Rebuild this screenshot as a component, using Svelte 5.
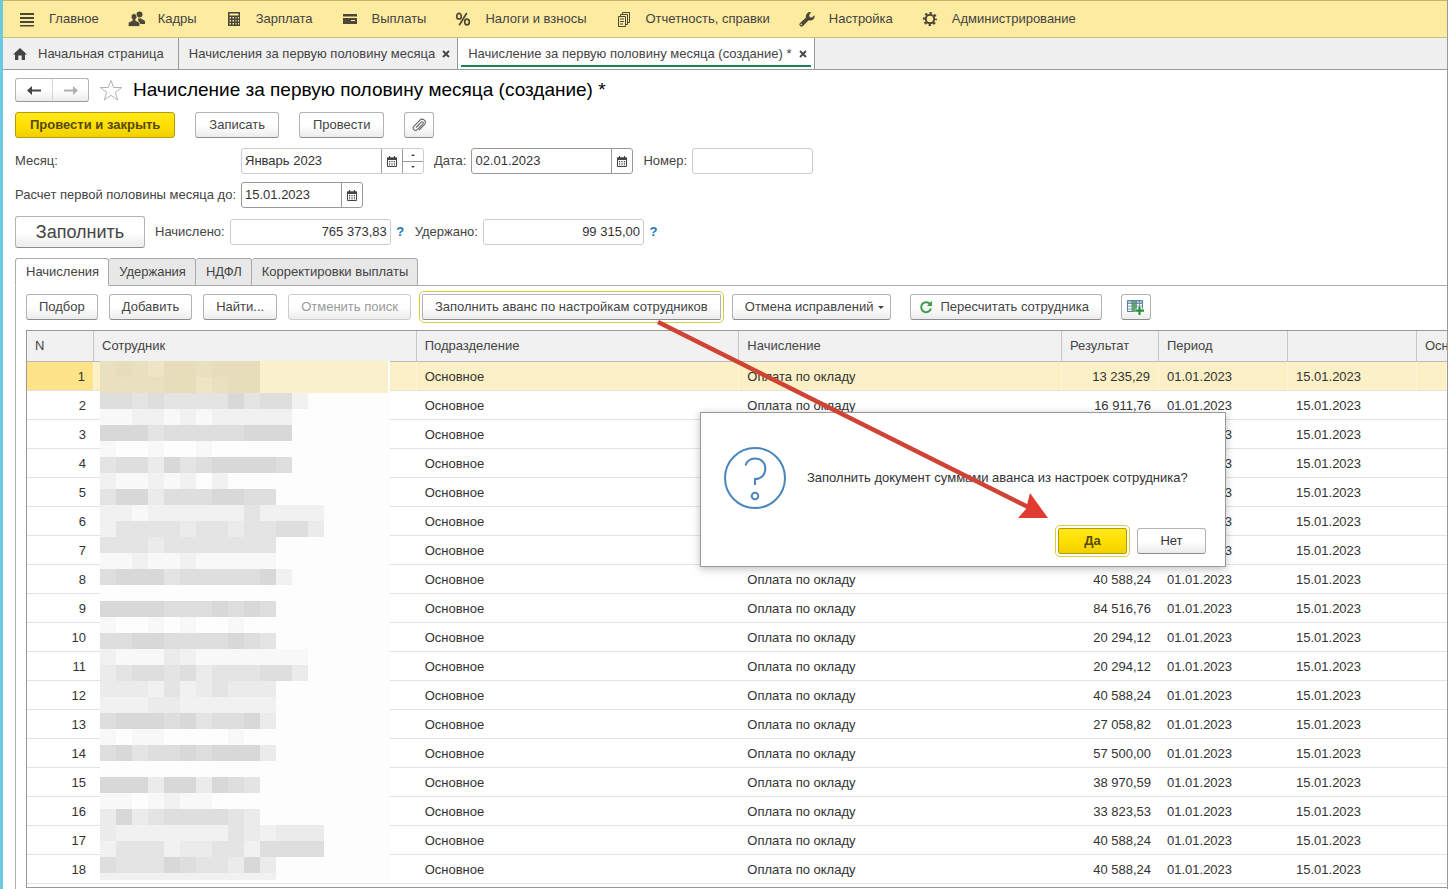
<script>
let tab = 'Начисления';
let active = 1;

const menu = [
	{ icon: 'list', label: 'Главное' },
	{ icon: 'people', label: 'Кадры' },
	{ icon: 'calc', label: 'Зарплата' },
	{ icon: 'card', label: 'Выплаты' },
	{ icon: 'percent', label: 'Налоги и взносы' },
	{ icon: 'docs', label: 'Отчетность, справки' },
	{ icon: 'wrench', label: 'Настройка' },
	{ icon: 'gear', label: 'Администрирование' }
];

const tabs = ['Начисления', 'Удержания', 'НДФЛ', 'Корректировки выплаты'];

const sums = [
	'13 235,29', '16 911,76', '27 058,82', '40 588,24', '40 588,24', '20 294,12',
	'40 588,24', '40 588,24', '84 516,76', '20 294,12', '20 294,12', '40 588,24',
	'27 058,82', '57 500,00', '38 970,59', '33 823,53', '40 588,24', '40 588,24'
];

const rows = sums.map((sum, i) => ({
	n: i + 1,
	dept: 'Основное',
	type: 'Оплата по окладу',
	sum,
	from: '01.01.2023',
	to: '15.01.2023'
}));

// hidden names: one char per 16px block
const shades = {
	1: '#f8f8f8', 2: '#f1f1f2', 3: '#ebebeb', 4: '#e4e4e5', 5: '#dfdedf', 6: '#d8d8d9',
	a: '#e8ddba', b: '#e9e0bf', c: '#efe5c4', y: '#faf0cb'
};
const blocks = [
	'babcaabaaayyyyyyyy',
	'bbbbaacbaayyyyyyyy',
	'5545444464552',
	'112212122222',
	'666455555666',
	'1  1  1',
	'455364566665',
	'211212 2',
	'46635556655',
	'22122222242222',
	'24444344344553',
	'44434444444',
	'11211211111',
	'566645555562',
	'',
	'66665556565',
	'1  1 1  1',
	'55665555654',
	'2111321111111',
	'3455453444553',
	'33324234333',
	'22233222222',
	'56665645563',
	'1 11    1',
	'56455656663',
	'',
	'6663663654',
	'11 1211',
	'3634555543',
	'32222222432333',
	'24442334425555',
	'54446544363',
	'22222222222'
];

const cells = blocks.flatMap((line, y) =>
	[...line].map((c, x) => ({ x: x * 16, y: y * 16, fill: shades[c] })).filter(c => c.fill)
);
</script>

<svelte:head>
	<title>Начисление за первую половину месяца</title>
</svelte:head>

{#snippet calendar()}
	<svg width="10" height="11" viewBox="0 0 10 11">
		<path d="M.5 2h9v8.500h-9zM.5 3.500h9M2.500 0v2M7.500 0v2" fill="none" stroke="#444" />
		<path d="M2 5.500h1.200M4.400 5.500h1.200M6.800 5.500H8M2 7.200h1.200M4.400 7.200h1.200M6.800 7.200H8M2 8.900h1.200M4.400 8.900h1.200M6.800 8.900H8" stroke="#444" />
		<path d="M0 1.500h10v2H0z" fill="#444" />
	</svg>
{/snippet}

{#snippet icon(name)}
	<svg class="icon" width="18" height="18" viewBox="0 0 18 18" fill="#4b4638">
		{#if name === 'list'}
			<path d="M1 3h14v2H1zM1 7h14v2H1zM1 11h14v2H1zM1 15h14v1.500H1z" />
		{:else if name === 'people'}
			<circle cx="11.500" cy="4.500" r="3" />
			<path d="M10 8.500h3l4 2.500v3h-6z" />
			<path stroke="#fdeb9f" stroke-width=".8" d="M6 3.500a3 3.200 0 0 1 1.700 5.800v1.200l3.300 1.500c.8.500.8 1.500.8 4.500H.2c0-3 0-4 .8-4.500l3.300-1.500V9.300A3 3.200 0 0 1 6 3.500z" />
		{:else if name === 'calc'}
			<path fill-rule="evenodd" d="M2 2h12v14H2zM3.500 3.500v2h9v-2zM3.500 7v1.500H5V7zM6.500 7v1.500H8V7zM9.500 7v1.500h1V7zM12 7v1.500h1V7zM3.500 10v1.500H5V10zM6.500 10v1.500H8V10zM9.500 10v1.500h1V10zM12 10v1.500h1V10zM3.500 13v1.500H5V13zM6.500 13v1.500H8V13zM9.500 13v1.500h1V13zM12 13v1.500h1V13z" />
		{:else if name === 'card'}
			<path d="M1 4h14v2.500H1zM1 8h14v6H1z" />
			<path d="M9 10.500h4" stroke="#fdeb9f" />
		{:else if name === 'percent'}
			<g fill="none" stroke="#4b4638" stroke-width="1.700">
				<ellipse cx="4" cy="6.200" rx="2.300" ry="2.800" />
				<ellipse cx="12" cy="12" rx="2.300" ry="2.800" />
				<path d="M11.800 3L4.200 15.200" />
			</g>
		{:else if name === 'docs'}
			<g fill="none" stroke="#4b4638">
				<path d="M2.500 6.500h7v10h-7zM4.500 6V4.500h7v10H10M6.500 4V2.500h7v10H12M4 9h4M4 11.500h4M4 14h3" />
			</g>
		{:else if name === 'wrench'}
			<path d="M15.500 5.200a4.300 4.300 0 0 1-5.800 5L4 16a2 2 0 0 1-2.900-2.900L7 7.500a4.300 4.300 0 0 1 5-5.300L10.200 5l.5 2.200 2.200.4zM2.700 13.700a.8.800 0 1 0 .1 1.300z" />
		{:else}
			<g fill="none" stroke="#4b4638">
				<circle cx="8" cy="9" r="4.200" stroke-width="2" />
				<circle cx="8" cy="9" r="6" stroke-width="2.200" stroke-dasharray="2.300 2.412" stroke-dashoffset="1.150" />
			</g>
		{/if}
	</svg>
{/snippet}

<div class="window">
	<nav class="menu">
		{#each menu as item}
			<a href="#menu">{@render icon(item.icon)}{item.label}</a>
		{/each}
	</nav>

	<div class="pages">
		<a class="page home" href="#home">
			<svg width="14" height="12" viewBox="0 0 14 12"><path d="M7 0l7 6.500h-2V12H8.700V7.500H5.300V12H2V6.500H0z" fill="#444" /></svg>
			Начальная страница
		</a>
		<div class="page">
			<a href="#list">Начисления за первую половину месяца</a>
			<button class="close" aria-label="Закрыть вкладку">
				<svg width="8" height="8" viewBox="0 0 8 8"><path d="M1 1l6 6M7 1L1 7" stroke="#444" stroke-width="1.800" /></svg>
			</button>
		</div>
		<div class="page current">
			<a href="#doc">Начисление за первую половину месяца (создание) *</a>
			<button class="close" aria-label="Закрыть документ">
				<svg width="8" height="8" viewBox="0 0 8 8"><path d="M1 1l6 6M7 1L1 7" stroke="#444" stroke-width="1.800" /></svg>
			</button>
		</div>
	</div>

	<main>
		<header>
			<div class="history">
				<button aria-label="Назад">
					<svg width="14" height="9" viewBox="0 0 14 9"><path d="M0 4.500L5 0v3.500h9v2H5V9z" fill="#444" /></svg>
				</button>
				<button aria-label="Вперед">
					<svg width="14" height="9" viewBox="0 0 14 9"><path d="M14 4.500L9 0v3.500H0v2h9V9z" fill="#b0b0b0" /></svg>
				</button>
			</div>
			<button class="star" aria-label="В избранное">
				<svg width="24" height="22" viewBox="0 0 24 22"><path d="M12 1.500l2.700 7h8l-6.400 4.800 2.400 7.700-6.700-4.700L5.300 21l2.400-7.700L1.300 8.500h8z" fill="none" stroke="#b0b0b0" /></svg>
			</button>
			<h1>Начисление за первую половину месяца (создание) *</h1>
		</header>

		<div class="commands">
			<button class="btn primary">Провести и закрыть</button>
			<button class="btn">Записать</button>
			<button class="btn">Провести</button>
			<button class="btn square" aria-label="Файлы">
				<svg width="14" height="14" viewBox="0 0 14 14"><path d="M4 9.500l5.200-5.300a1.200 1.200 0 0 1 1.700 1.700L5.200 11.700a2.300 2.300 0 0 1-3.300-3.300l6-6.200a3.100 3.100 0 0 1 4.500 4.400L7 12" fill="none" stroke="#666" stroke-width="1.100" /></svg>
			</button>
		</div>

		<div class="fields">
			<label class="wide" for="month">Месяц:</label>
			<div class="field light">
				<input id="month" class="long" value="Январь 2023" />
				<button aria-label="Выбрать месяц">{@render calendar()}</button>
				<div class="spin">
					<button aria-label="Следующий месяц"><svg width="4" height="2"><path d="M0 2l2-2 2 2z" fill="#444" /></svg></button>
					<button aria-label="Предыдущий месяц"><svg width="4" height="2"><path d="M0 0l2 2 2-2z" fill="#444" /></svg></button>
				</div>
			</div>
			<label class="next" for="date">Дата:</label>
			<div class="field">
				<input id="date" class="long" value="02.01.2023" />
				<button aria-label="Выбрать дату">{@render calendar()}</button>
			</div>
			<label class="next" for="number">Номер:</label>
			<div class="field light"><input id="number" class="number" value="" /></div>
		</div>

		<div class="fields">
			<label class="wide" for="until">Расчет первой половины месяца до:</label>
			<div class="field">
				<input id="until" class="short" value="15.01.2023" />
				<button aria-label="Выбрать дату расчета">{@render calendar()}</button>
			</div>
		</div>

		<div class="fields totals">
			<button class="btn big">Заполнить</button>
			<label class="next" for="accrued">Начислено:</label>
			<div class="field light"><input id="accrued" class="sum" value="765 373,83" readonly /></div>
			<button class="hint">?</button>
			<label class="next" for="withheld">Удержано:</label>
			<div class="field light"><input id="withheld" class="sum" value="99 315,00" readonly /></div>
			<button class="hint">?</button>
		</div>

		<div class="tabs" role="tablist">
			{#each tabs as name}
				<button role="tab" aria-selected={tab === name} class:selected={tab === name} on:click={() => (tab = name)}>{name}</button>
			{/each}
		</div>

		<section>
			<div class="toolbar">
				<button class="btn">Подбор</button>
				<button class="btn">Добавить</button>
				<button class="btn">Найти...</button>
				<button class="btn" disabled>Отменить поиск</button>
				<button class="btn framed">Заполнить аванс по настройкам сотрудников</button>
				<button class="btn drop">Отмена исправлений
					<svg width="6" height="3"><path d="M0 0h6L3 3z" fill="#444" /></svg>
				</button>
				<button class="btn recalc">
					<svg width="14" height="14" viewBox="0 0 14 14"><path d="M11.300 4.300A5 5 0 1 0 12 8.500" fill="none" stroke="#3c9d4c" stroke-width="2" /><path d="M13 .8V6H7.800z" fill="#3c9d4c" /></svg>
					Пересчитать сотрудника
				</button>
				<button class="btn square apart" aria-label="Добавить колонку">
					<svg width="17" height="15" viewBox="0 0 17 15">
						<path d="M.5.5h15v11H.5z" fill="#fff" stroke="#587f9b" />
						<path d="M1 1h14v2H1z" fill="#a9c5d8" />
						<path d="M5 1h4v11H5z" fill="#63a56c" />
						<path d="M1 3.500h14M1 6.200h4M1 9h4M9 6.200h6M5 1v11M9.500 1v11M12.500 1v6" stroke="#587f9b" stroke-width=".8" fill="none" />
						<path d="M12.500 6.500V15M8.500 10.700H17" stroke="#fff" stroke-width="4" />
						<path d="M12.500 6.500V15M8.500 10.700H17" stroke="#26903a" stroke-width="2.200" />
					</svg>
				</button>
			</div>

			<div class="grid">
				<table>
					<colgroup>
						<col class="c-n" /><col /><col /><col /><col class="c-sum" /><col class="c-date" /><col class="c-date" /><col class="c-base" />
					</colgroup>
					<thead>
						<tr>
							<th>N</th><th>Сотрудник</th><th>Подразделение</th><th>Начисление</th>
							<th>Результат</th><th>Период</th><th></th><th>Осн</th>
						</tr>
					</thead>
					<tbody>
						{#each rows as row}
							<tr class:active={active === row.n} on:click={() => (active = row.n)}>
								<td class="right">{row.n}</td>
								<td></td>
								<td>{row.dept}</td>
								<td>{row.type}</td>
								<td class="right">{row.sum}</td>
								<td>{row.from}</td>
								<td>{row.to}</td>
								<td></td>
							</tr>
						{/each}
					</tbody>
				</table>
				<svg class="mosaic" width="290" height="519" shape-rendering="crispEdges">
					<rect width="290" height="519" fill="#fdfdfd" />
					{#each cells as c}
						<rect x={c.x} y={c.y} width="16" height="16" fill={c.fill} />
					{/each}
				</svg>
			</div>
		</section>
	</main>

	<div class="dialog" role="dialog" aria-label="Вопрос">
		<div class="question">
			<svg width="62" height="62" viewBox="0 0 62 62" fill="none" stroke="#4a86bd" stroke-width="2">
				<circle cx="31" cy="31" r="30" />
				<path d="M21.500 18.500c1.500-4.500 5-7 9.500-7 6 0 10.300 4 10.300 10 0 6.500-4.500 10.500-10.300 10.500v6" />
				<circle cx="31" cy="49" r="3.300" />
			</svg>
			<p>Заполнить документ суммами аванса из настроек сотрудника?</p>
		</div>
		<div class="answers">
			<button class="btn primary framed">Да</button>
			<button class="btn">Нет</button>
		</div>
	</div>

	<svg class="arrow" width="394" height="200" viewBox="0 0 394 200">
		<path d="M3 2L375 188" stroke="#cf4335" stroke-width="4.500" />
		<path d="M393 198H363l8-9 4-16z" fill="#e03c31" />
	</svg>
</div>

<style>
	:global(body) {
		margin: 0;
		overflow: hidden;
		background: #fff;
	}

	.window {
		position: relative;
		box-sizing: border-box;
		height: 100vh;
		margin-right: 1px;
		border-left: 3px solid #6cc9df;
		border-right: 1px solid #999;
		overflow: hidden;
		color: #444;
		font: 13px/16px "Liberation Sans", Arial, sans-serif;
	}

	a {
		color: inherit;
		text-decoration: none;
	}

	button, input {
		font: inherit;
		color: inherit;
		margin: 0;
		border: 0;
		background: none;
		box-sizing: border-box;
	}

	button {
		display: flex;
		align-items: center;
		justify-content: center;
		padding: 0;
		white-space: nowrap;
	}

	svg {
		flex: none;
	}

	.menu {
		display: flex;
		gap: 29px;
		height: 36px;
		padding-left: 16px;
		border-top: 1px solid #c5b565;
		border-bottom: 1px solid #c9bf84;
		background: #fdeb9f;
	}

	.menu a {
		display: flex;
		align-items: center;
		gap: 12px;
		white-space: nowrap;
	}

	.pages {
		display: flex;
		height: 31px;
		border-bottom: 1px solid #999;
		background: #f0f0f0;
	}

	.page {
		display: flex;
		align-items: center;
		gap: 7px;
		padding: 0 7px 0 10px;
		border-right: 1px solid #999;
		white-space: nowrap;
	}

	.home {
		gap: 11px;
		padding-right: 14px;
	}

	.current {
		background: linear-gradient(#1d7f56, #1d7f56) center bottom 2px / calc(100% - 6px) 2px no-repeat #fff;
	}

	header {
		display: flex;
		align-items: center;
		gap: 10px;
		height: 24px;
	}

	main {
		padding: 8px 0 0 12px;
	}

	.history {
		display: flex;
		border: 1px solid #b3b3b3;
		border-bottom-color: #999;
		border-radius: 3px;
		background: linear-gradient(#fff, #fff 50%, #ececec);
	}

	.history button {
		width: 36px;
		height: 22px;
	}

	.history button + button {
		border-left: 1px solid #d5d5d5;
	}

	h1 {
		margin: 0;
		color: #000;
		font-size: 19px;
		font-weight: normal;
		line-height: 24px;
		white-space: nowrap;
	}

	.commands {
		display: flex;
		gap: 20px;
		margin: 10px 0;
	}

	.btn {
		height: 26px;
		padding: 0 13px;
		border: 1px solid #b3b3b3;
		border-bottom-color: #8c8c8c;
		border-radius: 3px;
		background: linear-gradient(#fff, #fff 50%, #ececec);
	}

	.btn:disabled {
		border-color: #ccc;
		color: #999;
	}

	.primary {
		padding: 0 14px;
		border-color: #b59d00;
		background: linear-gradient(#ffe71f, #ffe000 50%, #f0d000);
		color: #54490c;
		font-weight: bold;
	}

	.square {
		width: 30px;
		padding: 0;
	}

	.framed {
		border-radius: 2px;
		outline: 1px solid #dccb3c;
		outline-offset: 2px;
	}

	.fields {
		display: flex;
		align-items: center;
		gap: 5px;
		margin-bottom: 8px;
	}

	.wide {
		width: 221px;
		white-space: nowrap;
	}

	.next {
		margin-left: 5px;
	}

	.field {
		display: flex;
		height: 26px;
		box-sizing: border-box;
		border: 1px solid #999;
		border-radius: 3px;
		color: #333;
	}

	.light {
		border-color: #ccc;
	}

	.field input {
		padding: 0 3px;
		outline: 0;
	}

	.field > button {
		width: 21px;
		border-left: 1px solid #999;
	}

	.long {
		width: 139px;
	}

	.short {
		width: 99px;
	}

	.number {
		width: 119px;
	}

	.sum {
		width: 159px;
		text-align: right;
	}

	.spin {
		display: flex;
		flex-direction: column;
		width: 20px;
		border-left: 1px solid #999;
	}

	.spin button {
		flex: 1;
	}

	.spin button + button {
		border-top: 1px solid #999;
	}

	.totals {
		margin-bottom: 10px;
	}

	.big {
		width: 130px;
		height: 32px;
		font-size: 18px;
	}

	.hint {
		width: 9px;
		color: #1878b0;
		font-weight: bold;
	}

	.tabs {
		position: relative;
		z-index: 1;
		display: flex;
	}

	.tabs button {
		height: 28px;
		padding: 0 9px 0 10px;
		border: 1px solid #aaa;
		border-left: 0;
		border-radius: 3px 3px 0 0;
		background: #e8e8e8;
	}

	.tabs .selected {
		border-left: 1px solid #aaa;
		border-bottom-color: #fff;
		background: #fff;
	}

	section {
		margin-top: -1px;
		padding: 8px 0 100px 10px;
		border-top: 1px solid #aaa;
		border-left: 1px solid #aab5aa;
	}

	.toolbar {
		display: flex;
		gap: 11px;
		margin-bottom: 10px;
	}

	.toolbar .btn {
		padding: 0 12px;
	}

	.toolbar .drop {
		gap: 5px;
		padding-right: 6px;
	}

	.toolbar .recalc {
		gap: 7px;
		margin-left: 8px;
		padding-left: 8px;
	}

	.toolbar .square {
		margin-left: 8px;
		padding: 0;
	}

	.grid {
		position: relative;
		padding-bottom: 3px;
		border: 1px solid #999;
		border-right: 0;
	}

	table {
		width: 100%;
		table-layout: fixed;
		border-collapse: separate;
		border-spacing: 0;
	}

	.c-n {
		width: 67px;
	}

	.c-sum {
		width: 97px;
	}

	.c-date {
		width: 129px;
	}

	.c-base {
		width: 30px;
	}

	th, td {
		box-sizing: border-box;
		height: 29px;
		padding: 1px 8px 0;
		overflow: hidden;
		text-align: left;
		font-weight: normal;
		white-space: nowrap;
	}

	th {
		height: 31px;
		padding-top: 0;
		border-right: 1px solid #c8c8c8;
		border-bottom: 1px solid #bbb;
		background: #f1f1f1;
	}

	td {
		border-bottom: 1px solid #e2e2e2;
		color: #333;
	}

	th:last-child {
		padding-right: 0;
		border-right: 0;
	}

	.active td {
		border-right: 1px solid #fdf6dc;
		background: #fcf0c6;
	}

	.active td:first-child {
		background: #fee389;
	}

	.right {
		text-align: right;
	}

	.mosaic {
		position: absolute;
		top: 30px;
		left: 73px;
		pointer-events: none;
	}

	.dialog {
		position: absolute;
		top: 412px;
		left: 697px;
		z-index: 2;
		box-sizing: border-box;
		width: 526px;
		padding: 34px 19px 12px 23px;
		border: 1px solid #999;
		background: #fff;
		box-shadow: 0 2px 8px rgba(0, 0, 0, 0.25);
		color: #333;
	}

	.question {
		display: flex;
		align-items: center;
		gap: 21px;
	}

	.question p {
		margin: 0;
		white-space: nowrap;
	}

	.answers {
		display: flex;
		justify-content: flex-end;
		gap: 10px;
		margin-top: 19px;
	}

	.answers .btn {
		width: 69px;
	}

	.arrow {
		position: absolute;
		top: 320px;
		left: 652px;
		z-index: 3;
		pointer-events: none;
	}
</style>
